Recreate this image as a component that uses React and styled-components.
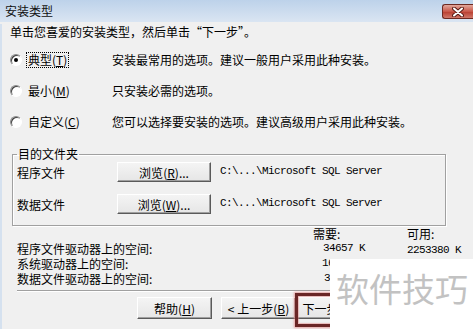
import styled, { createGlobalStyle } from 'styled-components';

const GlobalStyle = createGlobalStyle`
  html, body {
    margin: 0;
    padding: 0;
    background: #f0f0f0;
  }
  body {
    font-family: "Noto Sans CJK SC", "Noto Sans", sans-serif;
    font-size: 12px;
    color: #000;
  }
`;

const Window = styled.div`
  position: relative;
  width: 473px;
  height: 329px;
  overflow: hidden;
  background: #f0f0f0;
`;

const TitleBar = styled.div`
  height: 22px;
  display: flex;
  justify-content: space-between;
  background: linear-gradient(#bdd2ea, #dae5f2);
`;

const Title = styled.div`
  padding-left: 5px;
  line-height: 22px;
  color: #111;
`;

const CloseButton = styled.div`
  width: 31px;
  height: 15px;
  margin-top: 4px;
  box-sizing: border-box;
  border: 1px solid #6e2a22;
  border-right: none;
  border-radius: 3px 0 0 3px;
  background: linear-gradient(#e2a89c, #c9584a 50%, #b83c2e 51%, #d0786a);
  display: flex;
  align-items: center;
  justify-content: center;
`;

const Body = styled.div`
  border-left: 2px solid #d5e1ef;
  padding-left: 8px;
  height: 307px;
`;

const Intro = styled.div`
  margin-top: 2px;
  line-height: 16px;
  white-space: nowrap;
`;

const Options = styled.div`
  margin-top: 4px;
`;

const OptionRow = styled.div`
  display: grid;
  grid-template-columns: 102px 1fr;
  align-items: center;
  height: 31px;
  white-space: nowrap;
`;

const OptionLabel = styled.div`
  display: flex;
  align-items: center;
  gap: 5px;
`;

const Radio = styled.span`
  position: relative;
  width: 12px;
  height: 12px;
  box-sizing: border-box;
  border-radius: 50%;
  border: 1px solid;
  border-color: #8a8a8a #fff #fff #8a8a8a;
  background: #fff;
  box-shadow: inset 1px 1px 0 #404040;

  &::after {
    content: '';
    display: ${(p) => (p.$checked ? 'block' : 'none')};
    position: absolute;
    left: 3px;
    top: 3px;
    width: 4px;
    height: 4px;
    border-radius: 50%;
    background: #000;
  }
`;

const LabelText = styled.span`
  line-height: 14px;
  padding: 0 1px;
  outline: ${(p) => (p.$focused ? '1px dotted #000' : 'none')};
`;

const GroupBox = styled.fieldset`
  margin: 10px 0 0 2px;
  width: 434px;
  box-sizing: border-box;
  padding: 0 6px 11px 4px;
  border: 1px solid #a0a0a0;
  box-shadow: 1px 1px 0 #fff, inset 1px 1px 0 #fff;
`;

const Legend = styled.legend`
  padding: 0 1px;
  line-height: 14px;
`;

const FolderGrid = styled.div`
  margin-top: 1px;
  display: grid;
  grid-template-columns: 91px 94px auto;
  grid-auto-rows: 20px;
  column-gap: 9px;
  row-gap: 12px;
  align-items: center;
  white-space: nowrap;
`;

const Path = styled.span`
  font-family: "Liberation Mono", "DejaVu Sans Mono", monospace;
  font-size: 11px;
  letter-spacing: -0.6px;
  margin-top: -2px;
`;

const Button = styled.button`
  width: ${(p) => p.$width || 75}px;
  height: ${(p) => p.$height || 22}px;
  padding: 0;
  box-sizing: border-box;
  font-family: inherit;
  font-size: 12px;
  color: #000;
  background: linear-gradient(#f4f4f4, #e6e6e6);
  border: 1px solid;
  border-color: #fff #5a5a5a #5a5a5a #fff;
  box-shadow: inset -1px -1px 0 #a0a0a0;
  white-space: nowrap;
`;

const SpaceGrid = styled.div`
  margin-left: 7px;
  display: grid;
  grid-template-columns: 296px 94px auto;
  grid-auto-rows: 15px;
  line-height: 15px;
  white-space: nowrap;
`;

const Number = styled.span`
  font-family: "Liberation Mono", "DejaVu Sans Mono", monospace;
  font-size: 11px;
  letter-spacing: -0.6px;
  padding-left: ${(p) => p.$indent || 0}px;
  margin-top: ${(p) => p.$drop || 0}px;
`;

const Separator = styled.div`
  margin: 4px 0 0 7px;
  width: 439px;
  border-top: 1px solid #a0a0a0;
  border-bottom: 1px solid #fff;
`;

const ButtonRow = styled.div`
  margin-top: 5px;
  padding-left: 127px;
  display: flex;
`;

const Spacer = styled.div`
  width: ${(p) => p.$w}px;
`;

const Annotation = styled.div`
  position: absolute;
  left: 295px;
  top: 293px;
  width: 90px;
  height: 34px;
  box-sizing: border-box;
  border: 3px solid #6a2626;
  box-shadow: 0 0 2px 1px rgba(225, 130, 130, 0.7), inset 0 0 1px 1px rgba(225, 130, 130, 0.5);
`;

const Watermark = styled.div`
  position: absolute;
  left: 330px;
  top: 259px;
  right: 0;
  bottom: 0;
  background: #fff;
  padding: 9px 0 0 6px;
  font-size: 33px;
  line-height: 40px;
  color: #c2c2c2;
  white-space: nowrap;
`;

const options = [
  { label: '典型', key: 'T', desc: '安装最常用的选项。建议一般用户采用此种安装。', checked: true },
  { label: '最小', key: 'M', desc: '只安装必需的选项。' },
  { label: '自定义', key: 'C', desc: '您可以选择要安装的选项。建议高级用户采用此种安装。' },
];

const Mnemonic = ({ k }) => (
  <>
    (<u>{k}</u>)
  </>
);

export default function App() {
  return (
    <Window>
      <GlobalStyle />
      <TitleBar>
        <Title>安装类型</Title>
        <CloseButton>
          <svg width="12" height="10" viewBox="0 0 12 10">
            <path d="M2 1.5 L10 8.5 M10 1.5 L2 8.5" stroke="#5a1d16" strokeWidth="4" strokeLinecap="round" />
            <path d="M2 1.5 L10 8.5 M10 1.5 L2 8.5" stroke="#fff" strokeWidth="2" strokeLinecap="round" />
          </svg>
        </CloseButton>
      </TitleBar>
      <Body>
        <Intro>单击您喜爱的安装类型，然后单击“下一步”。</Intro>
        <Options>
          {options.map((o) => (
            <OptionRow key={o.key}>
              <OptionLabel>
                <Radio $checked={o.checked} />
                <LabelText $focused={o.checked}>
                  {o.label}
                  <Mnemonic k={o.key} />
                </LabelText>
              </OptionLabel>
              <span>{o.desc}</span>
            </OptionRow>
          ))}
        </Options>
        <GroupBox>
          <Legend>目的文件夹</Legend>
          <FolderGrid>
            <span>程序文件</span>
            <Button $width={94} $height={20}>
              浏览<Mnemonic k="R" />...
            </Button>
            <Path>C:\...\Microsoft SQL Server</Path>
            <span>数据文件</span>
            <Button $width={94} $height={20}>
              浏览<Mnemonic k="W" />...
            </Button>
            <Path>C:\...\Microsoft SQL Server</Path>
          </FolderGrid>
        </GroupBox>
        <SpaceGrid>
          <span />
          <span>需要:</span>
          <span>可用:</span>
          <span>程序文件驱动器上的空间:</span>
          <Number $indent={10}>34657 K</Number>
          <Number $drop={2}>2253380 K</Number>
          <span>系统驱动器上的空间:</span>
          <Number $indent={9}>167</Number>
          <span />
          <span>数据文件驱动器上的空间:</span>
          <Number $indent={11}>36</Number>
          <span />
        </SpaceGrid>
        <Separator />
        <ButtonRow>
          <Button>
            帮助<Mnemonic k="H" />
          </Button>
          <Spacer $w={9} />
          <Button>
            &lt; 上一步<Mnemonic k="B" />
          </Button>
          <Button>
            下一步<Mnemonic k="N" /> &gt;
          </Button>
        </ButtonRow>
      </Body>
      <Annotation />
      <Watermark>软件技巧</Watermark>
    </Window>
  );
}
